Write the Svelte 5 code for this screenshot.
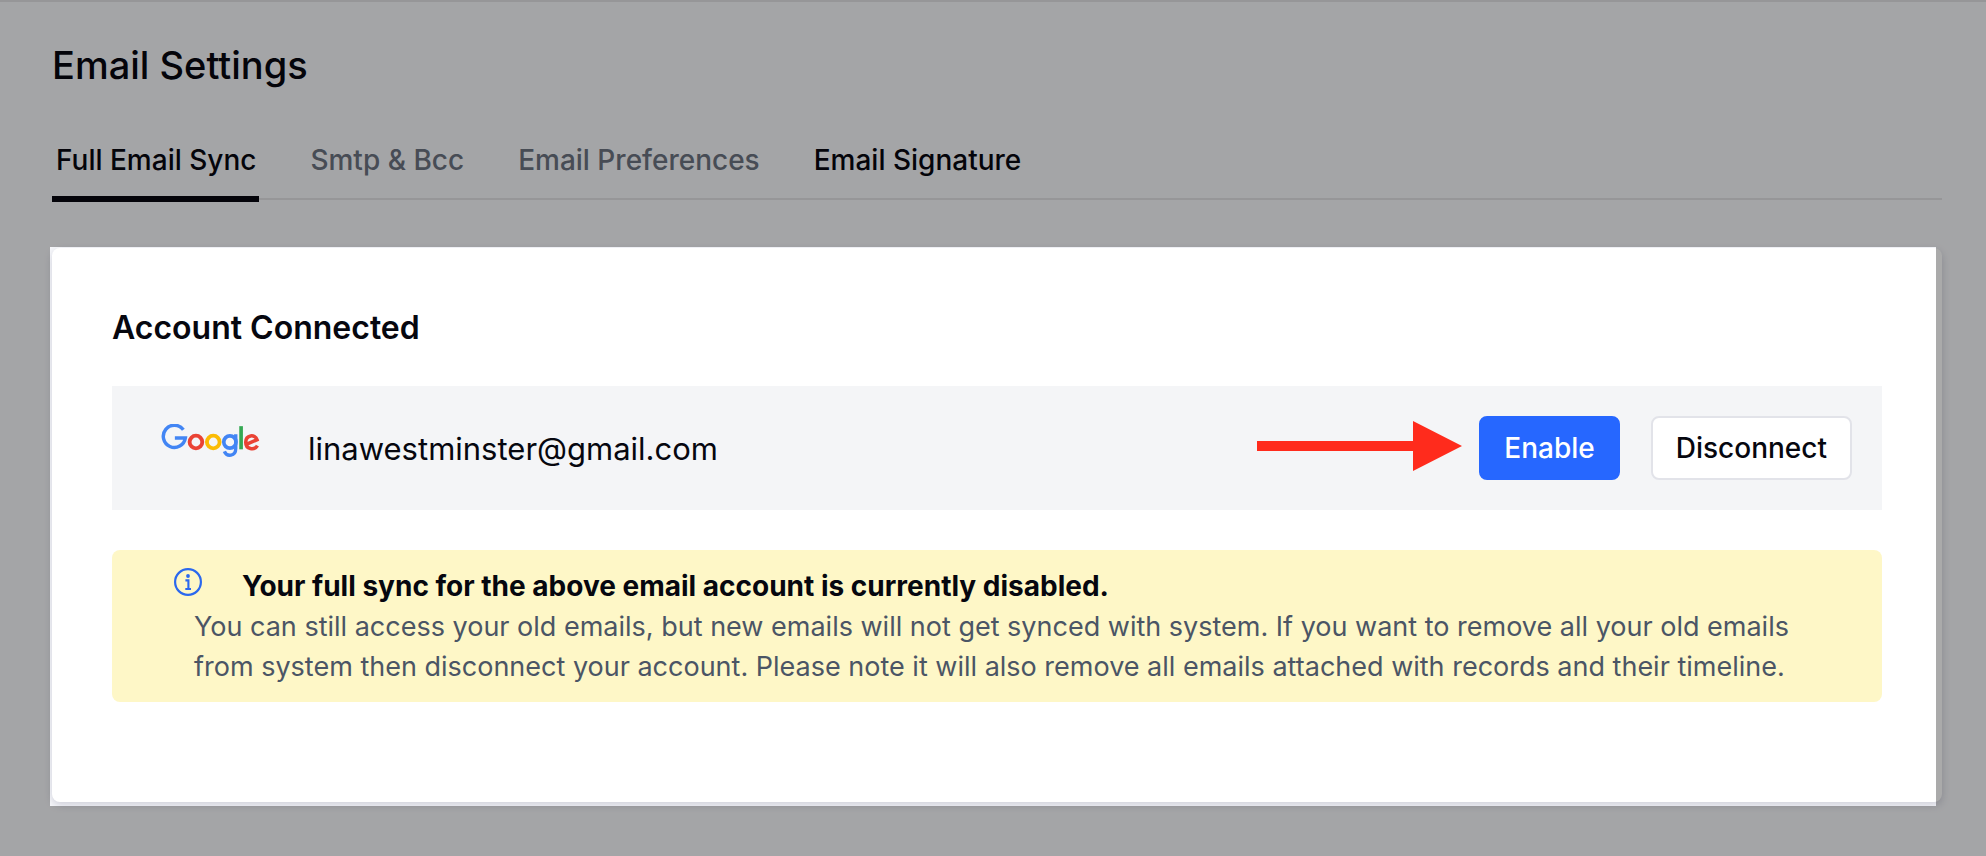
<script>
  const tabs = [
    { label: 'Full Email Sync', tone: 'active' },
    { label: 'Smtp & Bcc', tone: 'muted' },
    { label: 'Email Preferences', tone: 'muted' },
    { label: 'Email Signature', tone: 'plain' }
  ];
  const email = 'linawestminster@gmail.com';
</script>

<main class="page">
  <h1>Email Settings</h1>

  <nav class="tabs" aria-label="Email settings">
    {#each tabs as tab}
      <button type="button" class="tab {tab.tone}" aria-current={tab.tone === 'active' ? 'page' : undefined}>{tab.label}</button>
    {/each}
  </nav>

  <section class="card">
    <h2>Account Connected</h2>

    <div class="account">
      <svg class="logo" viewBox="0 0 100 36" role="img" aria-label="Google" fill="none">
        <path d="M22.6 5.7A11.2 11.2 0 1 0 24.6 14H14" stroke="#4285f4" stroke-width="3.5" />
        <circle cx="35.3" cy="18" r="6.4" stroke="#ea4335" stroke-width="3.9" />
        <circle cx="52.8" cy="18" r="6.4" stroke="#fbbc05" stroke-width="3.9" />
        <circle cx="69.6" cy="18" r="6.2" stroke="#4285f4" stroke-width="3.7" />
        <path d="M75.5 10.2V24.6C75.5 32.6 66.5 33.4 64 27.4" stroke="#4285f4" stroke-width="3.4" />
        <path d="M80.9 2V25.4" stroke="#34a853" stroke-width="3.7" />
        <path d="M85.6 20.6L97 15.7C95 9.6 85.6 10.7 85.6 18.2C85.6 25.4 94.2 27 97.4 21.6" stroke="#ea4335" stroke-width="3.6" />
      </svg>
      <span class="email">{email}</span>
      <svg class="arrow" viewBox="0 0 205 50" aria-hidden="true">
        <path d="M0 20H156V0L205 25L156 50V30H0Z" fill="#ff2b1c" />
      </svg>
      <button type="button" class="btn primary">Enable</button>
      <button type="button" class="btn">Disconnect</button>
    </div>

    <div class="notice" role="status">
      <div class="notice-head">
        <svg class="info" viewBox="0 0 28 28" aria-hidden="true" fill="none" stroke="#2b68ee">
          <circle cx="14" cy="14" r="12.9" stroke-width="2.2" />
          <circle cx="14" cy="8" r="1.9" fill="#2b68ee" stroke="none" />
          <path d="M11.4 12.4H14.4V21M11.3 21H17" stroke-width="2.1" />
        </svg>
        <strong>Your full sync for the above email account is currently disabled.</strong>
      </div>
      <p>You can still access your old emails, but new emails will not get synced with system. If you want to remove all your old emails from system then disconnect your account. Please note it will also remove all emails attached with records and their timeline.</p>
    </div>
    <div class="spotlight" aria-hidden="true"></div>
  </section>
</main>

<style>
  :global(body) {
    background: #a5a6a8;
  }

  .page {
    box-sizing: border-box;
    position: relative;
    min-height: 100vh;
    overflow: hidden;
    padding: 41px 44px 54px 52px;
    background: #f7f8fb;
    box-shadow: inset 0 2px #e1e2e4;
    color: #06070f;
    font-family: Inter, "Liberation Sans", sans-serif;
    font-size: 28px;
    line-height: 40px;
  }

  h1 {
    margin: 0;
    font-size: 38px;
    font-weight: 500;
    line-height: 48px;
  }

  .tabs {
    display: flex;
    gap: 47px;
    margin-top: 51px;
    box-shadow: inset 0 -2px #e1e2e4;
    height: 60px;
  }

  .tab {
    box-sizing: border-box;
    height: 62px;
    padding: 0 3px 16px 4px;
    border: 0;
    border-bottom: 6px solid transparent;
    background: none;
    color: inherit;
    font: inherit;
    font-weight: 500;
    white-space: nowrap;
  }

  .tab.active {
    border-bottom-color: #06070f;
  }

  .tab.muted {
    color: #6b7280;
  }

  .card {
    position: relative;
    padding: 60px 60px 100px;
    margin-top: 48px;
    border-radius: 8px;
    background: #fff;
    box-shadow: 0 3px 8px rgba(40, 40, 80, 0.2);
  }

  h2 {
    margin: 0;
    font-size: 32px;
    font-weight: 600;
    line-height: 40px;
  }

  .account {
    display: flex;
    align-items: center;
    padding: 30px;
    margin-top: 38px;
    background: #f4f5f7;
  }

  .logo {
    width: 99px;
    height: 36px;
    margin: 0 48px 12px 19px;
  }

  .email {
    padding-top: 2px;
    font-size: 31px;
    font-weight: 400;
  }

  .arrow {
    width: 205px;
    height: 50px;
    margin: 0 17px 4px auto;
  }

  .btn {
    box-sizing: border-box;
    height: 64px;
    padding: 0 23px;
    border: 2px solid #e2e3e9;
    border-radius: 8px;
    background: #fff;
    color: inherit;
    font: inherit;
    font-weight: 500;
  }

  .btn.primary {
    margin-right: 31px;
    border-color: #2667ff;
    background: #2667ff;
    color: #fff;
  }

  .notice {
    padding: 16px 60px 15px 82px;
    margin-top: 40px;
    border-radius: 8px;
    background: #fef7c7;
    color: #4b5565;
  }

  .notice-head {
    display: flex;
    gap: 40px;
    margin-left: -20px;
    color: #06070f;
  }

  .info {
    width: 28px;
    height: 28px;
    margin-top: 2px;
  }

  strong {
    font-weight: 700;
  }

  p {
    margin: 1px 0 0;
    font-size: 27px;
  }

  .spotlight {
    position: absolute;
    inset: -1px 6px -4px -2px;
    box-shadow: 0 0 0 200vmax rgba(0, 0, 0, 0.333);
    pointer-events: none;
  }
</style>
